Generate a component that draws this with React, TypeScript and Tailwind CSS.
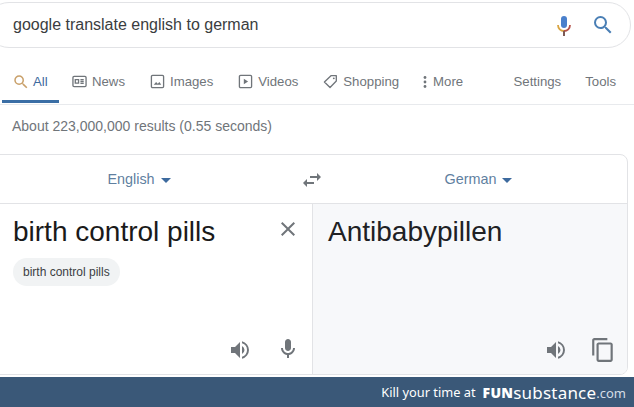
import { ReactNode } from "react";

function SearchIcon({ className }: { className?: string }) {
  return (
    <svg viewBox="0 0 24 24" className={className} fill="currentColor">
      <path d="M15.5 14h-.79l-.28-.27A6.47 6.47 0 0 0 16 9.5 6.5 6.5 0 1 0 9.5 16c1.61 0 3.09-.59 4.23-1.57l.27.28v.79l5 4.99L20.49 19l-4.99-5zm-6 0C7.01 14 5 11.99 5 9.5S7.01 5 9.5 5 14 7.01 14 9.5 11.99 14 9.5 14z" />
    </svg>
  );
}

function Speaker({ className }: { className?: string }) {
  return (
    <svg viewBox="0 0 24 24" className={className} fill="currentColor">
      <path d="M3 9v6h4l5 5V4L7 9H3zm13.5 3A4.5 4.5 0 0 0 14 7.97v8.05A4.5 4.5 0 0 0 16.5 12z" />
      <path d="M14 3.23v2.06a7 7 0 0 1 0 13.42v2.06a9 9 0 0 0 0-17.54z" />
    </svg>
  );
}

function Mic({ className }: { className?: string }) {
  return (
    <svg viewBox="0 0 24 24" className={className} fill="currentColor">
      <path d="M12 14c1.66 0 3-1.34 3-3V5c0-1.66-1.34-3-3-3S9 3.34 9 5v6c0 1.66 1.34 3 3 3z" />
      <path d="M17 11c0 2.76-2.24 5-5 5s-5-2.24-5-5H5c0 3.53 2.61 6.43 6 6.92V21h2v-3.08c3.39-.49 6-3.39 6-6.92h-2z" />
    </svg>
  );
}

function Tab({ icon, label }: { icon: ReactNode; label: string }) {
  return (
    <div className="flex items-center gap-[5px] text-[#70757a]">
      {icon}
      <span>{label}</span>
    </div>
  );
}

export default function App() {
  return (
    <div className="w-[634px] h-[407px] overflow-hidden bg-white flex flex-col font-['Liberation_Sans',Arial,sans-serif]">
      <div className="pt-[2px]">
        <div className="ml-[-14px] w-[645px] h-[46px] border border-[#e2e3e6] rounded-[23px] flex items-center pl-[26px] pr-[15px]">
          <span className="text-[16px] text-[#3a3d40] flex-1">google translate english to german</span>
          <svg viewBox="0 0 24 24" className="w-[24px] h-[24px] mr-[15px] mt-[1px]">
            <rect x="9" y="2" width="6" height="12" rx="3" fill="#4a80cc" />
            <path d="M6 11c0 3.4 2.6 6 6 6" stroke="#d9a441" strokeWidth="1.8" fill="none" />
            <path d="M18 11c0 3.4-2.6 6-6 6" stroke="#b5524a" strokeWidth="1.8" fill="none" />
            <rect x="11" y="17" width="2" height="5" fill="#7d5a55" />
          </svg>
          <SearchIcon className="w-[24px] h-[24px] text-[#4a7fb5]" />
        </div>
      </div>

      <div className="h-[57px] border-b border-[#e8eaed] flex items-start pt-[24px] text-[13.2px] relative">
        <div className="flex items-center gap-[3px] pl-[12px] w-[59px] text-[#3d6a9e]">
          <SearchIcon className="w-[18px] h-[18px] text-[#c9a06a] shrink-0" />
          <span>All</span>
        </div>
        <div className="absolute left-[2px] bottom-[1px] w-[57px] h-[3px] bg-[#3a6ea5]" />
        <div className="ml-[13px] flex gap-[25px]">
          <Tab
            label="News"
            icon={
              <svg viewBox="0 0 16 16" className="w-[15px] h-[15px]" fill="none" stroke="currentColor" strokeWidth="1.4">
                <rect x="1" y="2.5" width="14" height="11" rx="1.2" />
                <path d="M3.5 6h3.5v3.8H3.5z M9 6h3.5 M9 8h3.5 M9 10h3.5" />
              </svg>
            }
          />
          <Tab
            label="Images"
            icon={
              <svg viewBox="0 0 16 16" className="w-[15px] h-[15px]" fill="none" stroke="currentColor" strokeWidth="1.4">
                <rect x="1.5" y="1.5" width="13" height="13" rx="1.2" />
                <path d="M4 11.5l2.5-3 1.8 2 1.7-2 2 3z" fill="currentColor" stroke="none" />
              </svg>
            }
          />
          <Tab
            label="Videos"
            icon={
              <svg viewBox="0 0 16 16" className="w-[15px] h-[15px]" fill="none" stroke="currentColor" strokeWidth="1.4">
                <rect x="1.5" y="1.5" width="13" height="13" rx="1.2" />
                <path d="M6.2 5l4.6 3-4.6 3z" fill="currentColor" stroke="none" />
              </svg>
            }
          />
          <Tab
            label="Shopping"
            icon={
              <svg viewBox="0 0 16 16" className="w-[15px] h-[15px]" fill="none" stroke="currentColor" strokeWidth="1.4">
                <path d="M1.5 8.5L8.5 1.8h5.7v5.7L7.5 14.4z" strokeLinejoin="round" />
                <circle cx="11.5" cy="4.6" r="1" fill="currentColor" stroke="none" />
              </svg>
            }
          />
        </div>
        <div className="ml-[24px] flex items-center gap-[6px] text-[#70757a]">
          <svg viewBox="0 0 4 14" className="w-[4px] h-[14px]" fill="currentColor">
            <circle cx="2" cy="2.5" r="1.4" />
            <circle cx="2" cy="7" r="1.4" />
            <circle cx="2" cy="11.5" r="1.4" />
          </svg>
          <span>More</span>
        </div>
        <div className="ml-auto pr-[18px] flex gap-[24px] text-[#70757a]">
          <span>Settings</span>
          <span>Tools</span>
        </div>
      </div>

      <div className="h-[49px] pt-[11px] pl-[12px] text-[14px] text-[#70757a]">About 223,000,000 results (0.55 seconds)</div>

      <div className="ml-[-8px] w-[636px] h-[221px] border border-[#e2e3e6] rounded-[8px] overflow-hidden flex flex-col">
        <div className="h-[49px] pt-[1px] border-b border-[#e2e3e6] flex items-center text-[14.4px] text-[#5f7f9f]">
          <div className="w-[300px] flex items-center justify-center pr-[8px] gap-[6px]">
            <span>English</span>
            <span className="w-0 h-0 border-x-[5px] border-x-transparent border-t-[5px] border-t-[#3d6a9e] mt-[3px]" />
          </div>
          <svg viewBox="0 0 24 24" className="w-[24px] h-[24px] ml-[7px] text-[#70757a]" fill="currentColor">
            <path d="M6.99 11L3 15l3.99 4v-3H14v-2H6.99v-3zM21 9l-3.99-4v3H10v2h7.01v3L21 9z" />
          </svg>
          <div className="flex-1 flex items-center justify-center gap-[6px] pl-[6px]">
            <span>German</span>
            <span className="w-0 h-0 border-x-[5px] border-x-transparent border-t-[5px] border-t-[#3d6a9e] mt-[3px]" />
          </div>
        </div>
        <div className="flex-1 flex">
          <div className="w-[320px] border-r border-[#e2e3e6] pl-[20px] pr-[12px] pt-[10px] flex flex-col">
            <div className="flex items-start justify-between">
              <span className="text-[28px] leading-[36px] text-[#1a1a1a]">birth control pills</span>
              <svg viewBox="0 0 24 24" className="w-[24px] h-[24px] mt-[3px] text-[#70757a]" fill="currentColor">
                <path d="M19 6.41L17.59 5 12 10.59 6.41 5 5 6.41 10.59 12 5 17.59 6.41 19 12 13.41 17.59 19 19 17.59 13.41 12z" />
              </svg>
            </div>
            <span className="mt-[8px] self-start h-[28px] px-[10px] rounded-[14px] bg-[#f1f3f4] text-[12px] leading-[28px] text-[#3c4043]">birth control pills</span>
            <div className="mt-auto mb-[12px] flex justify-end gap-[24px] text-[#70757a]">
              <Speaker className="w-[24px] h-[24px] mt-[1px]" />
              <Mic className="w-[24px] h-[24px]" />
            </div>
          </div>
          <div className="flex-1 bg-[#f7f8fa] pl-[15px] pr-[11px] pt-[10px] flex flex-col">
            <span className="text-[28px] leading-[36px] text-[#202124]">Antibabypillen</span>
            <div className="mt-auto mb-[11px] flex justify-end items-center gap-[22px] text-[#70757a]">
              <Speaker className="w-[24px] h-[24px]" />
              <svg viewBox="0 0 24 24" className="w-[26px] h-[26px]" fill="currentColor">
                <path d="M16 1H4c-1.1 0-2 .9-2 2v14h2V3h12V1zm3 4H8c-1.1 0-2 .9-2 2v14c0 1.1.9 2 2 2h11c1.1 0 2-.9 2-2V7c0-1.1-.9-2-2-2zm0 16H8V7h11v14z" />
              </svg>
            </div>
          </div>
        </div>
      </div>

      <div className="mt-[2px] flex-1 bg-[#3a5878] flex items-center justify-end pr-[8px] pt-[1px] text-white font-['Noto_Sans',sans-serif]">
        <span className="text-[12.8px] mr-[7px]">Kill your time at</span>
        <span className="text-[14px] font-black tracking-[0.3px]">FUN</span>
        <span className="text-[17px] leading-none tracking-[0.2px]">substance</span>
        <span className="text-[13px] mt-[2px] text-[#d5dde6]">.com</span>
      </div>
    </div>
  );
}
